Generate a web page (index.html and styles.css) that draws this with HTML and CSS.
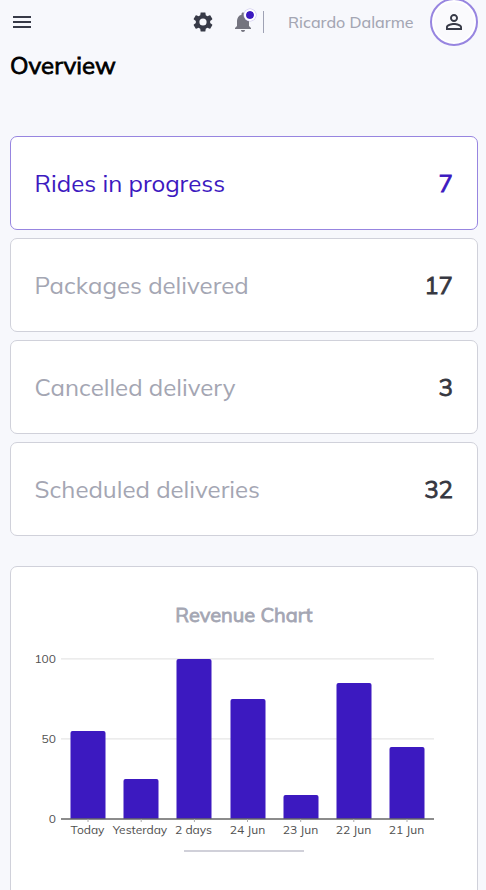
FILE: index.html
```html
<!DOCTYPE html>
<html lang="en">
<head>
<meta charset="utf-8">
<title>Overview</title>
<link rel="stylesheet" href="styles.css">
</head>
<body>
<header class="topbar">
  <svg class="menu" viewBox="0 0 24 24"><path d="M3 18h18v-2H3v2zm0-5h18v-2H3v2zm0-7v2h18V6H3z"/></svg>
  <svg class="gear" viewBox="0 0 24 24"><path d="M19.14 12.94c.04-.3.06-.61.06-.94 0-.32-.02-.64-.07-.94l2.03-1.58c.18-.14.23-.41.12-.61l-1.92-3.32c-.12-.22-.37-.29-.59-.22l-2.39.96c-.5-.38-1.03-.7-1.62-.94l-.36-2.54c-.04-.24-.24-.41-.48-.41h-3.84c-.24 0-.43.17-.47.41l-.36 2.54c-.59.24-1.13.57-1.62.94l-2.39-.96c-.22-.08-.47 0-.59.22L2.74 8.87c-.12.21-.08.47.12.61l2.03 1.58c-.05.3-.09.63-.09.94s.02.64.07.94l-2.03 1.58c-.18.14-.23.41-.12.61l1.92 3.32c.12.22.37.29.59.22l2.39-.96c.5.38 1.03.7 1.62.94l.36 2.54c.05.24.24.41.48.41h3.84c.24 0 .44-.17.47-.41l.36-2.54c.59-.24 1.13-.56 1.62-.94l2.39.96c.22.08.47 0 .59-.22l1.92-3.32c.12-.22.07-.47-.12-.61l-2.01-1.58zM12 15.6A3.6 3.6 0 1 1 12 8.4a3.6 3.6 0 0 1 0 7.2z"/></svg>
  <div class="bell">
    <svg viewBox="0 0 24 24"><path d="M12 22c1.1 0 2-.9 2-2h-4c0 1.1.89 2 2 2zm6-6v-5c0-3.07-1.64-5.64-4.5-6.32V4c0-.83-.67-1.5-1.5-1.5s-1.5.67-1.5 1.5v.68C7.63 5.36 6 7.92 6 11v5l-2 2v1h16v-1l-2-2z"/></svg>
    <i class="badge"></i>
  </div>
  <div class="divider"></div>
  <span class="user">Ricardo Dalarme</span>
  <div class="avatar"><svg viewBox="0 0 24 24"><path d="M12 5.9a2.1 2.1 0 1 1 0 4.2 2.1 2.1 0 0 1 0-4.200m0 9c2.970 0 6.100 1.460 6.100 2.100v1.100H5.900V17c0-.64 3.130-2.100 6.100-2.100M12 4C9.790 4 8 5.790 8 8s1.790 4 4 4 4-1.790 4-4-1.790-4-4-4zm0 9c-2.670 0-8 1.340-8 4v3h16v-3c0-2.660-5.330-4-8-4z"/></svg></div>
</header>
<h1>Overview</h1>
<main>
  <section class="stats">
    <div class="card active"><span>Rides in progress</span><b>7</b></div>
    <div class="card"><span>Packages delivered</span><b>17</b></div>
    <div class="card"><span>Cancelled delivery</span><b>3</b></div>
    <div class="card"><span>Scheduled deliveries</span><b>32</b></div>
  </section>
  <section class="chart-card">
    <h2>Revenue Chart</h2>
    <svg class="chart" width="424" height="190" viewBox="0 0 424 190">
      <g class="grid"><path d="M27 8.900h373M27 88.900h373"/></g>
      <g class="bars">
        <path d="M36.5 169V83a2 2 0 0 1 2-2h31a2 2 0 0 1 2 2v86z"/>
        <path d="M89.5 169v-38a2 2 0 0 1 2-2h31a2 2 0 0 1 2 2v38z"/>
        <path d="M142.5 169V11a2 2 0 0 1 2-2h31a2 2 0 0 1 2 2v158z"/>
        <path d="M196.500 169V51a2 2 0 0 1 2-2h31a2 2 0 0 1 2 2v118z"/>
        <path d="M249.500 169v-22a2 2 0 0 1 2-2h31a2 2 0 0 1 2 2v22z"/>
        <path d="M302.500 169V35a2 2 0 0 1 2-2h31a2 2 0 0 1 2 2v134z"/>
        <path d="M355.500 169V99a2 2 0 0 1 2-2h31a2 2 0 0 1 2 2v70z"/>
      </g>
      <path class="axis" d="M27 169h373"/>
      <path class="ticks" d="M54 169v3M107.200 169v3M160.400 169v3M213.500 169v3M266.700 169v3M319.800 169v3M373 169v3"/>
      <g class="ylab">
        <text x="22" y="13">100</text>
        <text x="22" y="93">50</text>
        <text x="22" y="173">0</text>
      </g>
      <g class="xlab">
        <text x="53.500" y="184">Today</text>
        <text x="106" y="184">Yesterday</text>
        <text x="159.500" y="184">2 days</text>
        <text x="213.500" y="184">24 Jun</text>
        <text x="266.500" y="184">23 Jun</text>
        <text x="319.500" y="184">22 Jun</text>
        <text x="372.500" y="184">21 Jun</text>
      </g>
    </svg>
    <div class="handle"></div>
  </section>
</main>
</body>
</html>
```
FILE: styles.css
```css
* { box-sizing: border-box; }
html { height: 100%; overflow: hidden; }
body {
  margin: 0;
  height: 100%;
  overflow: hidden;
  background: #f7f8fc;
  font-family: Muli, Mulish, Inter, "Open Sans", sans-serif;
}
svg { display: block; }
.topbar { display: flex; align-items: center; height: 44px; padding: 0 8px 0 10px; }
.topbar svg { width: 24px; height: 24px; fill: #373a47; flex: none; }
.topbar .gear { margin-left: 157px; }
.bell { position: relative; margin-left: 16px; }
.bell svg { fill: #74747f; }
.badge {
  position: absolute;
  left: 13px;
  top: -1px;
  width: 12px;
  height: 12px;
  border-radius: 50%;
  background: #3c19c0;
  border: 2px solid #fff;
  box-shadow: 0 0 0 .5px #c5bdec;
  background-clip: padding-box;
}
.divider { width: 1px; height: 22px; margin-left: 8px; background: #9fa2b4; }
.user { margin-left: 24px; width: 126px; font-size: 16px; font-weight: 500; color: #a4a6b3; white-space: nowrap; }
.avatar {
  display: flex;
  align-items: center;
  justify-content: center;
  width: 48px;
  height: 48px;
  flex: none;
  margin: -2px 0 -2px auto;
  border: 2px solid #9785e0;
  border-radius: 50%;
  background: #fafafd;
  box-shadow: inset 0 0 0 2px #fff;
}
h1, h2, b { font-weight: 400; -webkit-text-stroke: .8px currentColor; }
h1 { margin: 6px 0 0 10px; font-size: 24px; line-height: 30px; }
main { padding: 56px 8px 0 10px; }
.stats { display: flex; flex-direction: column; gap: 8px; }
.card {
  display: flex;
  align-items: center;
  justify-content: space-between;
  height: 94px;
  padding: 0 24px 0 23.5px;
  background: #fff;
  border: 1px solid #d0d1da;
  border-radius: 7px;
  color: #a4a6b3;
  font-size: 24px;
}
.card b { color: #363740; }
.card.active { color: #3c19c0; border-color: #9785e0; }
.card.active b { color: #3c19c0; }
.chart-card {
  height: 360px;
  margin-top: 30px;
  padding: 34px 20px 0 23px;
  background: #fff;
  border: 1px solid #d0d1da;
  border-radius: 7px;
}
h2 { margin: 0; padding-right: 3px; text-align: center; color: #a4a6b3; font-size: 20px; line-height: 28px; }
.chart { margin-top: 21px; overflow: visible; }
.grid path { stroke: #e6e6e6; stroke-width: 1.2; }
.bars { fill: #3c19c0; }
.axis { stroke: #666; stroke-width: 1.3; }
.ticks { stroke: #aaa; fill: none; }
.chart text { font-size: 12px; fill: #505050; }
.ylab { text-anchor: end; }
.xlab { text-anchor: middle; }
.handle { width: 120px; height: 2px; margin: 10px 0 0 150px; background: #d0d0d9; }
```
